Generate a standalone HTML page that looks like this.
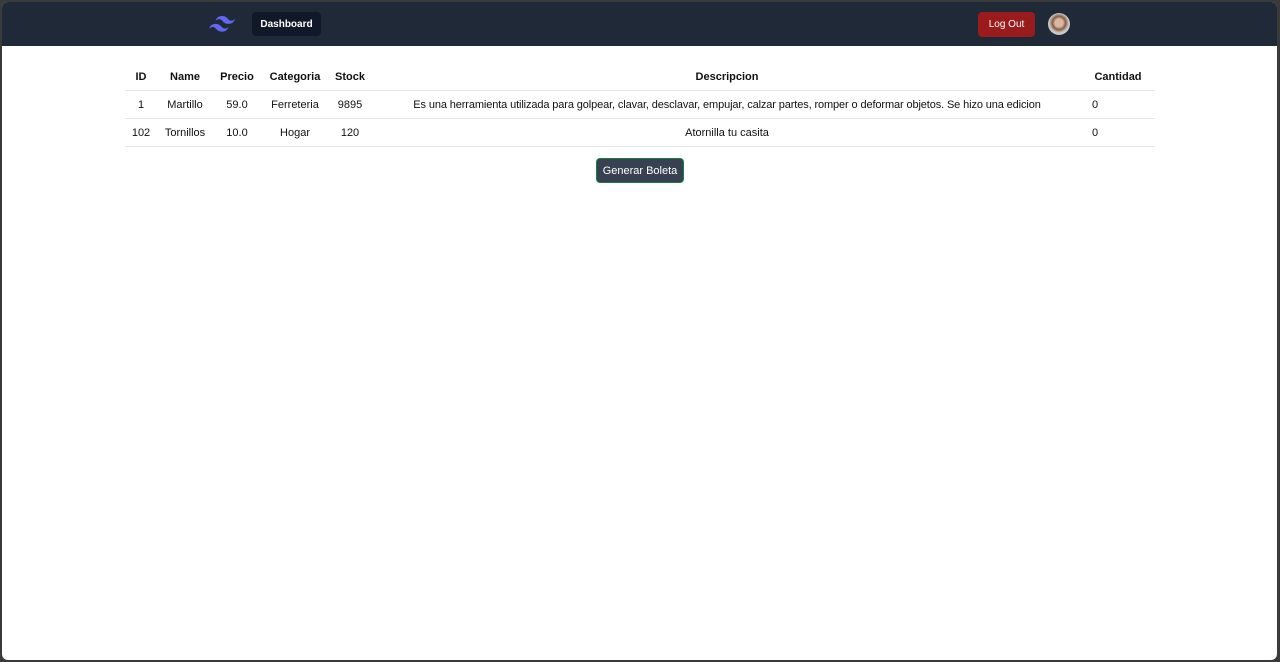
<!DOCTYPE html>
<html><head><meta charset="utf-8"><style>
*{margin:0;padding:0;box-sizing:border-box}
html,body{width:1280px;height:662px;overflow:hidden;background:#3a3a3a;font-family:"Liberation Sans",sans-serif}
.frame{position:absolute;left:2px;top:2px;width:1275px;height:658px;background:#fff;border-radius:6px;overflow:hidden}
.nav{position:absolute;left:0;top:0;width:100%;height:44px;background:#1f2937}
.t{position:absolute;font-size:11px;color:#111;white-space:nowrap;transform:translateX(-50%)}
.h{font-weight:bold}
.line{position:absolute;left:123px;width:1030px;height:1px;background:#e5e7eb}
</style></head><body>
<div class="frame">
<div class="nav">
<svg style="position:absolute;left:207px;top:14px" width="26" height="16" viewBox="0 0 54 33"><path fill="#6366f1" d="M27 0c-7.2 0-11.7 3.6-13.5 10.8 2.7-3.6 5.850-4.95 9.45-4.05 2.054.513 3.522 2.004 5.147 3.653C30.744 13.09 33.808 16.2 40.5 16.2c7.2 0 11.7-3.6 13.5-10.8-2.7 3.6-5.85 4.95-9.45 4.050-2.054-.513-3.522-2.004-5.147-3.653C36.756 3.11 33.692 0 27 0zM13.5 16.2C6.3 16.2 1.8 19.8 0 27c2.7-3.6 5.85-4.95 9.45-4.05 2.054.514 3.522 2.004 5.147 3.653C17.244 29.29 20.308 32.4 27 32.4c7.2 0 11.7-3.6 13.5-10.8-2.7 3.6-5.85 4.95-9.45 4.05-2.054-.513-3.522-2.004-5.147-3.653C23.256 19.31 20.192 16.2 13.5 16.2z"/></svg>
<div style="position:absolute;left:250px;top:10px;width:69px;height:24px;background:#111827;border-radius:4px;color:#fff;font-size:10px;font-weight:bold;text-align:center;line-height:25px">Dashboard</div>
<div style="position:absolute;left:976px;top:10px;width:57px;height:25px;background:#991b1b;border-radius:4px;color:#fff;font-size:10px;text-align:center;line-height:26px">Log Out</div>
<div style="position:absolute;left:1046px;top:11px;width:22px;height:22px;border-radius:50%;background:radial-gradient(circle at 50% 45%,#d8b8a0 0 25%,#8a5a40 40%,#c8c8c8 60%)"></div>
</div>
<div class="t h" style="left:139px;top:69px">ID</div>
<div class="t h" style="left:183px;top:69px">Name</div>
<div class="t h" style="left:235px;top:69px">Precio</div>
<div class="t h" style="left:293px;top:69px">Categoria</div>
<div class="t h" style="left:348px;top:69px">Stock</div>
<div class="t h" style="left:725px;top:69px">Descripcion</div>
<div class="t h" style="left:1116px;top:69px">Cantidad</div>
<div class="line" style="top:88px"></div>
<div class="t" style="left:139px;top:97px">1</div>
<div class="t" style="left:183px;top:97px">Martillo</div>
<div class="t" style="left:235px;top:97px">59.0</div>
<div class="t" style="left:293px;top:97px">Ferreteria</div>
<div class="t" style="left:348px;top:97px">9895</div>
<div class="t" style="left:725px;top:97px;letter-spacing:-0.12px">Es una herramienta utilizada para golpear, clavar, desclavar, empujar, calzar partes, romper o deformar objetos. Se hizo una edicion</div>
<div class="t" style="left:1093px;top:97px">0</div>
<div class="line" style="top:116px"></div>
<div class="t" style="left:139px;top:125px">102</div>
<div class="t" style="left:183px;top:125px">Tornillos</div>
<div class="t" style="left:235px;top:125px">10.0</div>
<div class="t" style="left:293px;top:125px">Hogar</div>
<div class="t" style="left:348px;top:125px">120</div>
<div class="t" style="left:725px;top:125px">Atornilla tu casita</div>
<div class="t" style="left:1093px;top:125px">0</div>
<div class="line" style="top:144px"></div>
<div style="position:absolute;left:594px;top:156px;width:88px;height:25px;background:#374151;border:1px solid #15803d;border-radius:4px;color:#fff;font-size:11px;text-align:center;line-height:25px">Generar Boleta</div>
</div>
</body></html>
